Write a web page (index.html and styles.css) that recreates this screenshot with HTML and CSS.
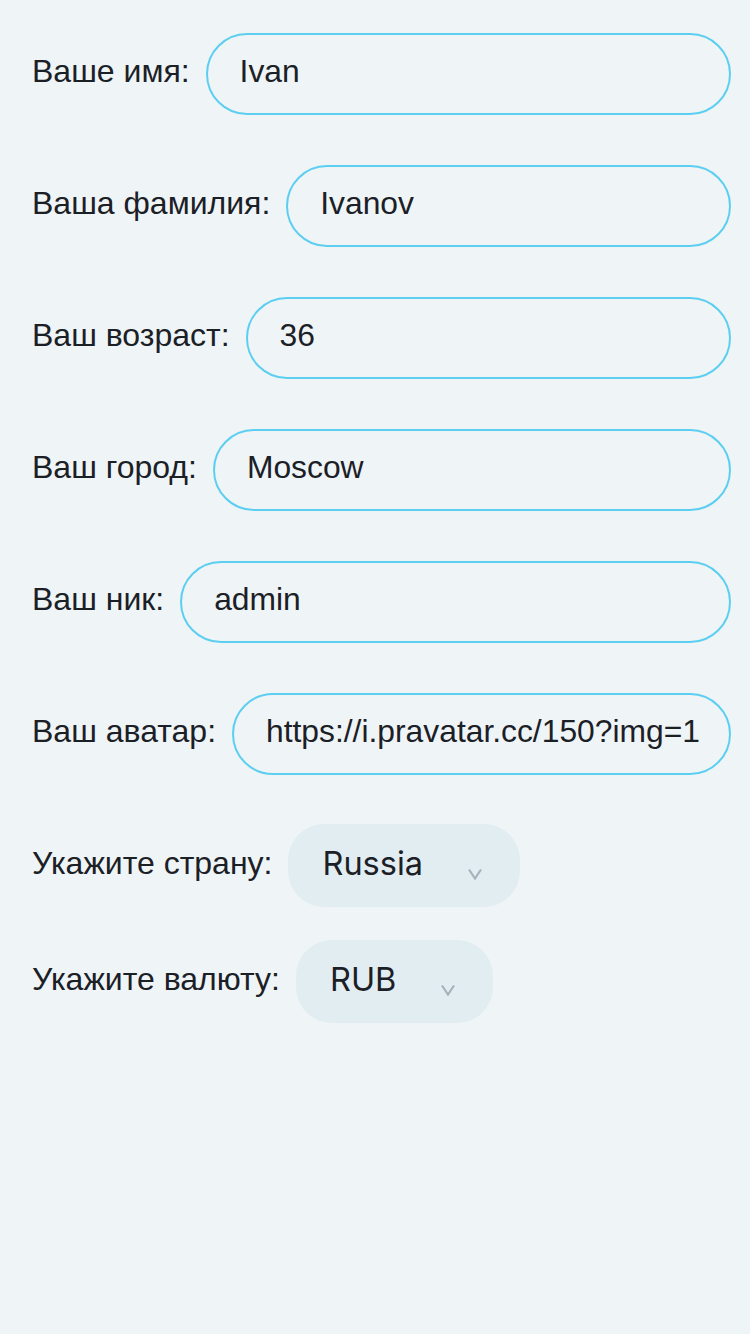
FILE: index.html
```html
<!DOCTYPE html>
<html lang="ru">
<head>
<meta charset="utf-8">
<link rel="stylesheet" href="styles.css">
</head>
<body>
<form class="form">
  <div class="row"><label class="label">Ваше имя:</label><div class="input">Ivan</div></div>
  <div class="row"><label class="label">Ваша фамилия:</label><div class="input">Ivanov</div></div>
  <div class="row"><label class="label">Ваш возраст:</label><div class="input">36</div></div>
  <div class="row"><label class="label">Ваш город:</label><div class="input">Moscow</div></div>
  <div class="row"><label class="label">Ваш ник:</label><div class="input">admin</div></div>
  <div class="row"><label class="label">Ваш аватар:</label><div class="input">https://i.pravatar.cc/150?img=1</div></div>
  <div class="row row-select"><label class="label">Укажите страну:</label>
    <div class="select"><span class="select-value">Russia</span>
      <svg class="chev" width="14" height="12" viewBox="0 0 14 12"><path d="M1 1.5 L7 10.5 L13 1.5" fill="none" stroke="#a6b3ba" stroke-width="2.2"/></svg>
    </div>
  </div>
  <div class="row row-select"><label class="label">Укажите валюту:</label>
    <div class="select"><span class="select-value">RUB</span>
      <svg class="chev" width="14" height="12" viewBox="0 0 14 12"><path d="M1 1.5 L7 10.5 L13 1.5" fill="none" stroke="#a6b3ba" stroke-width="2.2"/></svg>
    </div>
  </div>
</form>
</body>
</html>
```
FILE: styles.css
```css
html, body {
  margin: 0;
  padding: 0;
  background: #eff4f7;
}
body {
  width: 750px;
  min-height: 1334px;
  font-family: "Liberation Sans", Arial, sans-serif;
  color: #1b2026;
}
.form {
  display: flex;
  flex-direction: column;
  padding: 33px 19px 0 32px;
}
.row {
  display: flex;
  align-items: center;
  gap: 16px;
  margin-bottom: 50px;
}
.row-select {
  margin-bottom: 33px;
}
.row:not(.row-select) + .row-select {
  margin-top: -1px;
}
.label {
  font-size: 32px;
  white-space: nowrap;
  margin-top: -5px;
}
.input {
  flex: 1;
  box-sizing: border-box;
  height: 82px;
  border: 2px solid #5ccff1;
  border-radius: 42px;
  padding: 0 30px 5px 32px;
  display: flex;
  align-items: center;
  font-size: 31.8px;
  white-space: nowrap;
  overflow: hidden;
}
.select {
  box-sizing: border-box;
  height: 83px;
  background: #e2edf2;
  border-radius: 36px;
  display: flex;
  align-items: center;
  padding: 0 38px 4px 34px;
  font-family: Inter, "Liberation Sans", sans-serif;
  font-size: 32.5px;
}
.select-value {
  margin-right: 45px;
}
.chev {
  margin-top: 20px;
}
```
